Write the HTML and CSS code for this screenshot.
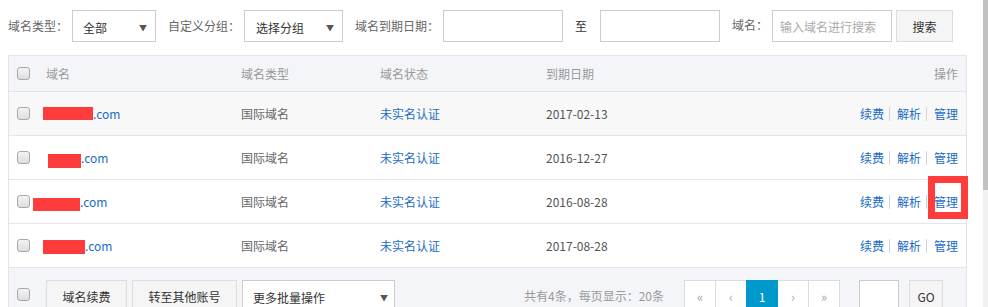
FILE: index.html
```html
<!DOCTYPE html>
<html lang="zh-CN">
  <head>
    <meta charset="UTF-8" />
    <title>域名列表</title>
    <link rel="stylesheet" href="styles.css">
  </head>
  <body>
    <div class="page">
      <!-- Filter bar -->
      <div class="filter-bar">
        <span class="label">域名类型：</span>
        <div class="select select-type"><span>全部</span><i class="arrow">▼</i></div>
        <span class="label">自定义分组：</span>
        <div class="select select-group"><span>选择分组</span><i class="arrow">▼</i></div>
        <span class="label">域名到期日期：</span>
        <input class="input" type="text" />
        <span class="label label-to">至</span>
        <input class="input" type="text" />
        <span class="label label-name">域名：</span>
        <input class="input input-search" type="text" placeholder="输入域名进行搜索" />
        <button class="btn btn-search">搜索</button>
      </div>

      <!-- Domain table -->
      <div class="domain-table">
        <div class="row head">
          <div class="cell-check"><span class="check"></span></div>
          <div>域名</div>
          <div>域名类型</div>
          <div>域名状态</div>
          <div>到期日期</div>
          <div class="cell-ops">操作</div>
        </div>

        <div class="row hover">
          <div class="cell-check"><span class="check"></span></div>
          <div class="cell-domain"><span class="mask mask-1"></span><a class="link">.com</a></div>
          <div>国际域名</div>
          <div><a class="link">未实名认证</a></div>
          <div class="date">2017-02-13</div>
          <div class="cell-ops">
            <a class="op">续费</a><span class="sep"></span><a class="op">解析</a><span class="sep"></span><a class="op">管理</a>
          </div>
        </div>

        <div class="row">
          <div class="cell-check"><span class="check"></span></div>
          <div class="cell-domain"><span class="mask mask-2"></span><a class="link">.com</a></div>
          <div>国际域名</div>
          <div><a class="link">未实名认证</a></div>
          <div class="date">2016-12-27</div>
          <div class="cell-ops">
            <a class="op">续费</a><span class="sep"></span><a class="op">解析</a><span class="sep"></span><a class="op">管理</a>
          </div>
        </div>

        <div class="row">
          <div class="cell-check"><span class="check"></span></div>
          <div class="cell-domain"><span class="mask mask-3"></span><a class="link">.com</a></div>
          <div>国际域名</div>
          <div><a class="link">未实名认证</a></div>
          <div class="date">2016-08-28</div>
          <div class="cell-ops">
            <a class="op">续费</a><span class="sep"></span><a class="op">解析</a><span class="sep"></span><a class="op marked">管理</a>
          </div>
        </div>

        <div class="row">
          <div class="cell-check"><span class="check"></span></div>
          <div class="cell-domain"><span class="mask mask-4"></span><a class="link">.com</a></div>
          <div>国际域名</div>
          <div><a class="link">未实名认证</a></div>
          <div class="date">2017-08-28</div>
          <div class="cell-ops">
            <a class="op">续费</a><span class="sep"></span><a class="op">解析</a><span class="sep"></span><a class="op">管理</a>
          </div>
        </div>

        <!-- Batch actions + pager -->
        <div class="foot">
          <div class="cell-check"><span class="check"></span></div>
          <button class="btn btn-renew">域名续费</button>
          <button class="btn btn-transfer">转至其他账号</button>
          <div class="select select-batch"><span>更多批量操作</span><i class="arrow">▼</i></div>
          <span class="count">共有4条，每页显示：20条</span>
          <div class="pager">
            <span class="pg">«</span>
            <span class="pg">‹</span>
            <span class="pg active">1</span>
            <span class="pg">›</span>
            <span class="pg">»</span>
          </div>
          <input class="page-input" type="text" />
          <button class="btn btn-go">GO</button>
        </div>
      </div>
    </div>

    <div class="scrollbar"><div class="thumb"></div></div>
  </body>
</html>
```

FILE: styles.css
```css
/* Global */
html,
body {
  margin: 0;
  height: 307px;
  overflow: hidden;
}

body {
  display: flex;
  font-family: "Noto Sans CJK SC", sans-serif;
  font-size: 12px;
  color: #666;
  background: #fff;
}

.page {
  flex: 1;
  padding: 10px 16px 0 8px;
}

.scrollbar {
  width: 5px;
  background: #f1f1f1;
}

.scrollbar .thumb {
  height: 190px;
  background: #c1c1c1;
}

/* Filter bar */
.filter-bar {
  display: flex;
  align-items: center;
  height: 32px;
}

.label {
  margin-right: 4px;
  line-height: 32px;
  color: #666;
}

.label-to {
  color: #333;
  margin-right: 13px;
}

.label-name {
  margin-top: -3px;
}

.select,
.input {
  height: 32px;
  box-sizing: border-box;
  border: 1px solid #ccc;
  margin-right: 12px;
  background: #fff;
}

.select {
  display: flex;
  align-items: center;
  justify-content: space-between;
  padding: 2px 8px 0 10px;
  color: #333;
}

.select .arrow {
  font-style: normal;
  font-size: 8px;
  color: #555;
}

.select-type {
  width: 84px;
}

.select-group {
  width: 99px;
  padding-left: 11px;
}

.input {
  width: 120px;
  padding: 0 7px;
  font-family: inherit;
  font-size: 12px;
  outline: none;
}

.input::placeholder {
  color: #aaa;
}

.input-search {
  margin-right: 4px;
}

.btn {
  height: 32px;
  box-sizing: border-box;
  border: 1px solid #ddd;
  background: #f5f5f5;
  color: #333;
  font-family: inherit;
  font-size: 12px;
  padding: 0;
}

.btn-search {
  width: 57px;
}

/* Table */
.domain-table {
  margin-top: 13px;
  border: 1px solid #e1e5eb;
}

.row {
  display: grid;
  grid-template-columns: 37px 195px 139px 166px 1fr auto;
  align-items: center;
  height: 43px;
  border-bottom: 1px solid #e4e6ea;
}

.row.head {
  height: 35px;
  background: #f4f5f9;
  color: #999;
  border-bottom-color: #e1e5eb;
}

.row.hover {
  background: #f8f8f8;
}

.cell-check {
  padding-left: 8px;
}

.check {
  display: block;
  width: 11px;
  height: 11px;
  border: 1px solid #a8a8a8;
  border-radius: 3px;
  background: linear-gradient(#f4f4f4, #dedede);
}

.date {
  color: #555;
}

.link {
  color: #1a6cc4;
}

/* Domain cell with redaction masks */
.cell-domain {
  display: flex;
  align-items: center;
}

.mask {
  display: inline-block;
  height: 13px;
  background: #ff3c3c;
}

.mask-1 {
  width: 50px;
  margin-left: -3px;
}

.mask-2 {
  width: 33px;
  height: 14px;
  margin-left: 2px;
  margin-top: 6px;
}

.mask-3 {
  width: 47px;
  margin-left: -13px;
  margin-top: 5px;
}

.mask-4 {
  width: 42px;
  height: 14px;
  margin-left: -3px;
  margin-top: 2px;
}

/* Operations */
.cell-ops {
  display: flex;
  align-items: center;
  justify-content: flex-end;
  padding-right: 8px;
}

.op {
  display: inline-block;
  line-height: 14px;
  color: #1a6cc4;
}

.sep {
  width: 1px;
  height: 14px;
  background: #d4d4d4;
  margin: 0 7px 0 5px;
}

.op.marked {
  position: relative;
}

.op.marked::after {
  content: "";
  position: absolute;
  left: -6px;
  right: -10px;
  top: -19px;
  bottom: -10px;
  border: 7px solid #ff3c3c;
}

/* Footer */
.foot {
  display: flex;
  align-items: flex-start;
  padding: 12px 23px 12px 0;
  background: #f4f5f9;
}

.foot .cell-check {
  width: 37px;
  box-sizing: border-box;
  padding-top: 8px;
}

.btn-renew {
  width: 81px;
  margin-right: 5px;
}

.btn-transfer {
  width: 105px;
  margin-right: 5px;
}

.select-batch {
  width: 153px;
  padding-right: 6px;
  margin-right: 0;
}

.count {
  margin-left: auto;
  margin-right: 20px;
  line-height: 32px;
  color: #999;
}

.pager {
  display: flex;
  margin-right: 19px;
}

.pg {
  width: 32px;
  height: 32px;
  box-sizing: border-box;
  border: 1px solid #ddd;
  background: #fff;
  color: #aaa;
  font-size: 13px;
  display: flex;
  align-items: center;
  justify-content: center;
}

.pg + .pg {
  margin-left: -1px;
}

.pg.active {
  background: #0099cc;
  border-color: #0099cc;
  color: #fff;
  font-size: 12px;
  position: relative;
}

.page-input {
  width: 40px;
  height: 32px;
  box-sizing: border-box;
  border: 1px solid #ccc;
  margin: 0 10px 0 0;
  outline: none;
}

.btn-go {
  width: 34px;
}
```
